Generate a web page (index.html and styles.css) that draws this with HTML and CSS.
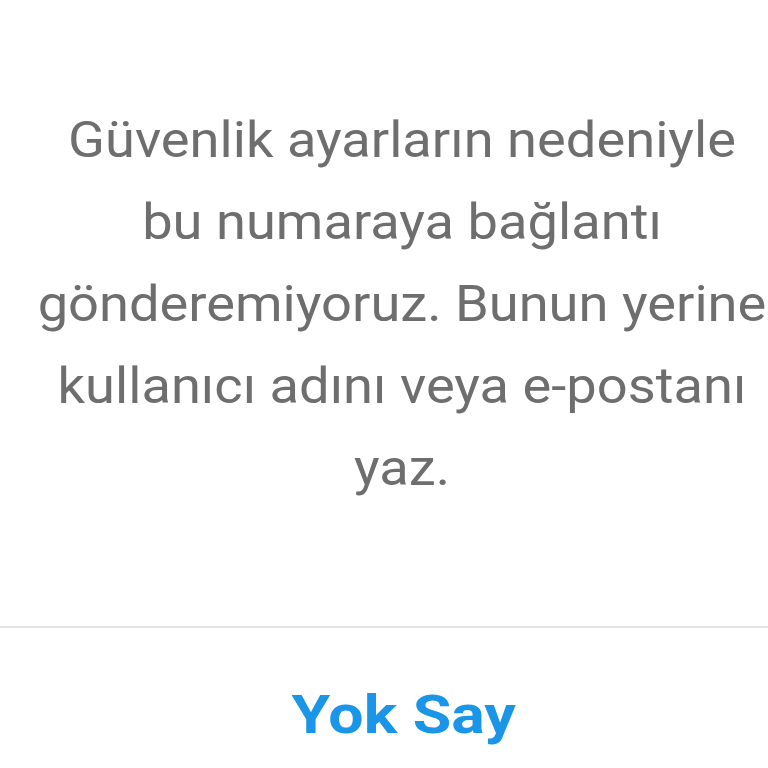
FILE: index.html
```html
<!DOCTYPE html>
<html lang="tr">
<head>
<meta charset="utf-8">
<title>Bağlantı gönderilemedi</title>
<link rel="stylesheet" href="styles.css">
</head>
<body>
<div class="dialog">
  <p class="message">Güvenlik ayarların nedeniyle bu numaraya bağlantı gönderemiyoruz. Bunun yerine kullanıcı adını veya e-postanı yaz.</p>
  <div class="actions">
    <button class="action" type="button">Yok Say</button>
  </div>
</div>
</body>
</html>
```
FILE: styles.css
```css
html, body {
  margin: 0;
  padding: 0;
  background: #ffffff;
}

body {
  font-family: Roboto, "Noto Sans", "Liberation Sans", sans-serif;
  width: 768px;
  height: 768px;
  overflow: hidden;
}

.dialog {
  display: flex;
  flex-direction: column;
}

/* wide-set dialog type: Roboto stretched horizontally */
.message {
  margin: 0 0 0 64px;
  width: 676px;
  padding: 99px 0 117px;
  font-size: 50px;
  line-height: 82px;
  color: #6e6e6e;
  text-align: center;
  transform: scaleX(1.085);
  transform-origin: center;
}

.actions {
  border-top: 2px solid #e4e4e4;
  display: flex;
  justify-content: center;
  padding-top: 60px;
}

.action {
  border: 0;
  background: none;
  padding: 0;
  margin-left: 39px;
  font-family: inherit;
  font-size: 54px;
  line-height: 54px;
  font-weight: 700;
  color: #1a95e8;
  transform: scaleX(1.16);
  transform-origin: center;
}
```
